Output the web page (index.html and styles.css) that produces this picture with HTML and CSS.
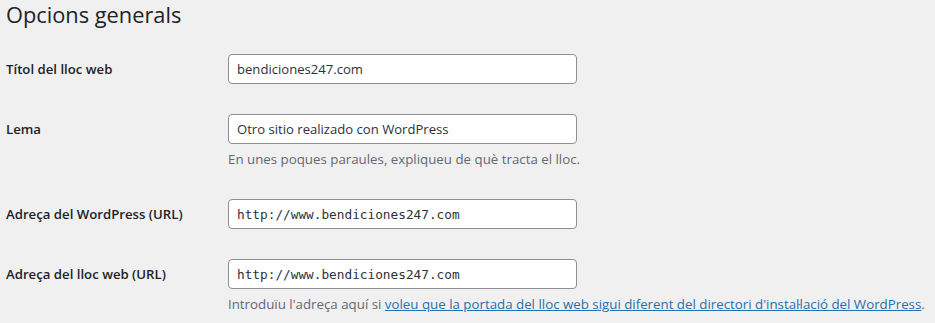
FILE: index.html
```html
<!DOCTYPE html>
<html lang="ca">
  <head>
    <meta charset="utf-8">
    <title>Opcions generals</title>
    <link rel="stylesheet" href="styles.css">
  </head>
  <body class="wp-admin">
    <div class="wrap">
      <h1>Opcions generals</h1>

      <form class="form-table">
        <div class="row">
          <label class="label" for="blogname">Títol del lloc web</label>
          <div class="value">
            <input id="blogname" class="regular-text" type="text" value="bendiciones247.com">
          </div>
        </div>

        <div class="row">
          <label class="label" for="blogdescription">Lema</label>
          <div class="value">
            <input id="blogdescription" class="regular-text" type="text" value="Otro sitio realizado con WordPress">
            <p class="description">En unes poques paraules, expliqueu de què tracta el lloc.</p>
          </div>
        </div>

        <div class="row">
          <label class="label" for="siteurl">Adreça del WordPress (URL)</label>
          <div class="value">
            <input id="siteurl" class="regular-text code" type="url" value="http://www.bendiciones247.com">
          </div>
        </div>

        <div class="row">
          <label class="label" for="home">Adreça del lloc web (URL)</label>
          <div class="value">
            <input id="home" class="regular-text code" type="url" value="http://www.bendiciones247.com">
            <p class="description">Introduïu l'adreça aquí si <a href="#">voleu que la portada del lloc web sigui diferent del directori d'instal·lació del WordPress</a>.</p>
          </div>
        </div>
      </form>
    </div>
  </body>
</html>
```

FILE: styles.css
```css
html,
body {
  margin: 0;
  padding: 0;
  background: #f0f0f1;
}

.wp-admin {
  color: #1d2327;
  font-family: "Open Sans", "Noto Sans", sans-serif;
  font-size: 13px;
}

.wrap {
  padding: 0 0 0 6px;
}

h1 {
  margin: 0 0 9px 0;
  font-size: 21.8px;
  font-weight: 400;
  line-height: 30px;
}

.row {
  display: grid;
  grid-template-columns: 222px 1fr;
  padding: 15px 0;
}

.label {
  font-size: 13.2px;
  font-weight: 600;
  line-height: 30px;
}

.value {
  min-width: 0;
}

.regular-text {
  display: block;
  box-sizing: border-box;
  width: 349px;
  height: 30px;
  margin: 0;
  padding: 0 8px;
  border: 1px solid #8c8f94;
  border-radius: 4px;
  background: #fff;
  color: #2c3338;
  font-family: inherit;
  font-size: 13.1px;
}

.code {
  font-family: "DejaVu Sans Mono", monospace;
  font-size: 12.75px;
}

.description {
  margin: 6px 0 1px 0;
  color: #646970;
  font-size: 13.3px;
  line-height: 18px;
  white-space: nowrap;
}

.description a {
  color: #2271b1;
  text-decoration: underline;
}
```
